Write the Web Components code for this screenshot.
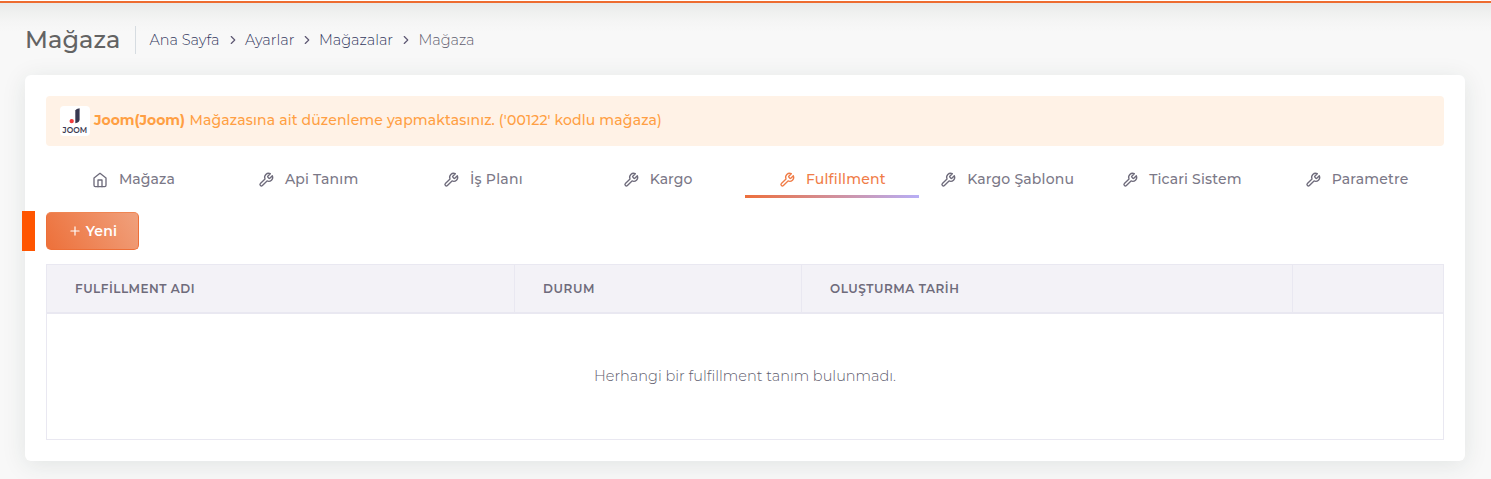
<!DOCTYPE html>
<html lang="tr">
<head>
<meta charset="utf-8">
<title>Mağaza</title>
<style>
html,body{margin:0;height:100%}
body{font-family:Montserrat,Inter,"Noto Sans",sans-serif;font-size:14px;color:#6e6b7b;background:#f8f8f8;overflow:hidden}
</style>
</head>
<body>
<store-page></store-page>
<script>
const define = (name, html, setup) => customElements.define(name, class extends HTMLElement {
  connectedCallback() {
    if (this.shadowRoot) return;
    const t = document.createElement('template');
    t.innerHTML = html;
    this.attachShadow({mode: 'open'}).append(t.content.cloneNode(true));
    if (setup) setup(this, this.shadowRoot);
  }
});

// Label that spreads its letters evenly over a given width
define('fit-text', `<style>:host{display:inline-block;white-space:pre;flex:none}span{display:inline-block;white-space:pre}</style><span><slot></slot></span>`,
  (el, root) => {
    const s = root.querySelector('span'), w = +el.getAttribute('w');
    const n = [...el.textContent].length;
    s.style.letterSpacing = '0';
    s.style.letterSpacing = (w - s.getBoundingClientRect().width) / n + 'px';
    el.style.width = w + 'px';
  });

const icons = {
  home: '<path d="M3 9l9-7 9 7v11a2 2 0 0 1-2 2H5a2 2 0 0 1-2-2z"/><path d="M9 22V12h6v10"/>',
  tool: '<path d="M14.7 6.3a1 1 0 0 0 0 1.4l1.6 1.6a1 1 0 0 0 1.4 0l3.77-3.77a6 6 0 0 1-7.94 7.94l-6.91 6.91a2.12 2.12 0 0 1-3-3l6.91-6.91a6 6 0 0 1 7.94-7.94l-3.76 3.76z"/>',
  chevron: '<path d="M9 18l6-6-6-6"/>',
  plus: '<path d="M12 5v14M5 12h14"/>'
};
define('ui-icon', `<style>:host{display:block;flex:none;width:var(--s,14px);height:var(--s,14px)}svg{display:block;width:100%;height:100%;fill:none;stroke:currentColor;stroke-width:2;stroke-linecap:round;stroke-linejoin:round;overflow:visible}</style><svg viewBox="0 0 24 24"></svg>`,
  (el, root) => { root.querySelector('svg').innerHTML = icons[el.getAttribute('name')]; });

define('page-header', `<style>
:host{display:flex;align-items:center;height:28px;padding:0 0 0 25px}
h2{margin:0;font-size:24px;line-height:28px;font-weight:500;color:#636363;width:110px;border-right:1px solid #d6dce1;box-sizing:content-box}
nav{display:flex;align-items:center;padding-left:13.5px;font-size:14.5px;font-weight:300;color:#34385f;line-height:21px}
nav fit-text{margin-top:1px}
nav ui-icon{--s:14px;margin:0 5.5px 0 6px;color:#5e5873}
.cur{color:#605d6e}
</style><h2><fit-text w="95.5">Mağaza</fit-text></h2>
<nav><fit-text w="70">Ana Sayfa</fit-text><ui-icon name="chevron"></ui-icon><fit-text w="49.5">Ayarlar</fit-text><ui-icon name="chevron" style="margin-left:5px"></ui-icon><fit-text w="74">Mağazalar</fit-text><ui-icon name="chevron" style="margin:0 6px 0 5.5px"></ui-icon><fit-text class="cur" w="56">Mağaza</fit-text></nav>`);

define('joom-logo', `<style>:host{display:block;width:30px;height:30px;background:#fff;border-radius:4px;overflow:hidden}svg{display:block}</style>
<svg width="30" height="30" viewBox="0 0 30 30"><path d="M15.3 4.6Q16 2.6 19.6 2.2V13.5Q19.4 16.8 15.3 17.2Z" fill="#383850"/><circle cx="11.7" cy="15.1" r="2.2" fill="#f03c3c"/><text x="2.6" y="27.4" textLength="24.4" lengthAdjust="spacingAndGlyphs" font-family="Montserrat, Inter, sans-serif" font-weight="600" font-size="8.2" fill="#383850">JOOM</text></svg>`);

define('store-alert', `<style>
:host{display:flex;align-items:center;height:50px;padding-left:14px;background:#fff2e6;border-radius:4px;color:#ff9f43;font-weight:500;line-height:20px}
.msg{display:flex;gap:4.5px;margin:-2px 0 0 4px}b{font-weight:700}
</style><joom-logo></joom-logo><div class="msg"><b><fit-text w="91">Joom(Joom)</fit-text></b><fit-text w="472.5">Mağazasına ait düzenleme yapmaktasınız. ('00122' kodlu mağaza)</fit-text></div>`);

define('nav-tab', `<style>
:host{display:flex;flex-direction:column;flex:1 1 0;min-width:0}
.row{display:flex;align-items:center;justify-content:center;height:37px;line-height:20px;padding-top:4px;box-sizing:border-box}
ui-icon{--s:16px;margin:3px 11px 0 0;color:#6e6b7b}
:host([active]) ui-icon{color:inherit}
.bar{height:3px;margin-right:1px}
:host([active]){color:#f07c47}
:host([active]) .bar{background:linear-gradient(90deg,#ed6f3c,#b7aef6)}
</style><div class="row"><ui-icon></ui-icon><slot></slot></div><div class="bar"></div>`,
  (el, root) => {
    const i = document.createElement('ui-icon');
    i.setAttribute('name', el.getAttribute('icon') || 'tool');
    root.querySelector('ui-icon').replaceWith(i);
  });

define('nav-tabs', `<style>:host{display:flex;height:40px;margin-top:12px;font-size:14px;font-weight:500;color:#7b7887}</style>
<nav-tab icon="home"><fit-text w="56">Mağaza</fit-text></nav-tab><nav-tab><fit-text w="73.5">Api Tanım</fit-text></nav-tab><nav-tab><fit-text w="53">İş Planı</fit-text></nav-tab><nav-tab><fit-text w="43">Kargo</fit-text></nav-tab><nav-tab active><fit-text w="80">Fulfillment</fit-text></nav-tab><nav-tab><fit-text w="107">Kargo Şablonu</fit-text></nav-tab><nav-tab><fit-text w="92.5">Ticari Sistem</fit-text></nav-tab><nav-tab><fit-text w="77">Parametre</fit-text></nav-tab>`);

define('new-button', `<style>
:host{display:flex;position:relative;margin-top:14px;height:38px}
button{display:flex;align-items:center;justify-content:center;gap:4px;box-sizing:border-box;width:93px;height:38px;padding:0;border:1px solid #ed6f38;border-top-color:#ef8553;border-radius:5px;background:linear-gradient(60deg,#ed703a,#f0a17d);color:#fff;font:600 14px/20px Montserrat,Inter,sans-serif}
.mark{position:absolute;left:-24px;top:-1px;width:13px;height:40px;background:#ff5500}
</style><span class="mark"></span><button><ui-icon name="plus"></ui-icon><fit-text w="31.5">Yeni</fit-text></button>`);

define('data-table', `<style>
:host{display:block;margin-top:14px}
.box{border:1px solid #e9e8f1;height:174px;display:flex;flex-direction:column}
.head{display:grid;grid-template-columns:468px 287px 491px 1fr;height:47px;background:#f3f2f7;border-bottom:2px solid #e9e8f1;font-size:12px;font-weight:600}
.head div{display:flex;align-items:center;padding-left:28px;border-right:1px solid #e9e8f1}
.head div:last-child{border:0}
.body{flex:1;display:flex;align-items:center;justify-content:center;font-size:14.5px;font-weight:300;color:#605d6e;line-height:20px;padding-bottom:2px}
</style><div class="box"><div class="head"><div><fit-text w="120">FULFİLLMENT ADI</fit-text></div><div><fit-text w="52">DURUM</fit-text></div><div><fit-text w="129.5">OLUŞTURMA TARİH</fit-text></div><div></div></div>
<div class="body"><fit-text w="302">Herhangi bir fulfillment tanım bulunmadı.</fit-text></div></div>`);

define('store-card', `<style>:host{display:block;box-sizing:border-box;margin:21px 26px 0 25px;height:386px;padding:21px;background:#fff;border-radius:6px;box-shadow:0 4px 24px rgba(34,61,47,.1)}</style><slot></slot>`);

define('store-page', `<style>
:host{display:block;box-sizing:border-box;height:479px;background:linear-gradient(#fff 1px,#ed6c30 1px,#ed6c30 3px,transparent 3px),linear-gradient(#e8eae9 3px,#eff0ef 12px,#f5f5f5 22px,#f8f8f8 32px);padding-top:26px}
</style><page-header></page-header><store-card><store-alert></store-alert><nav-tabs></nav-tabs><new-button></new-button><data-table></data-table></store-card>`);
</script>
</body>
</html>
